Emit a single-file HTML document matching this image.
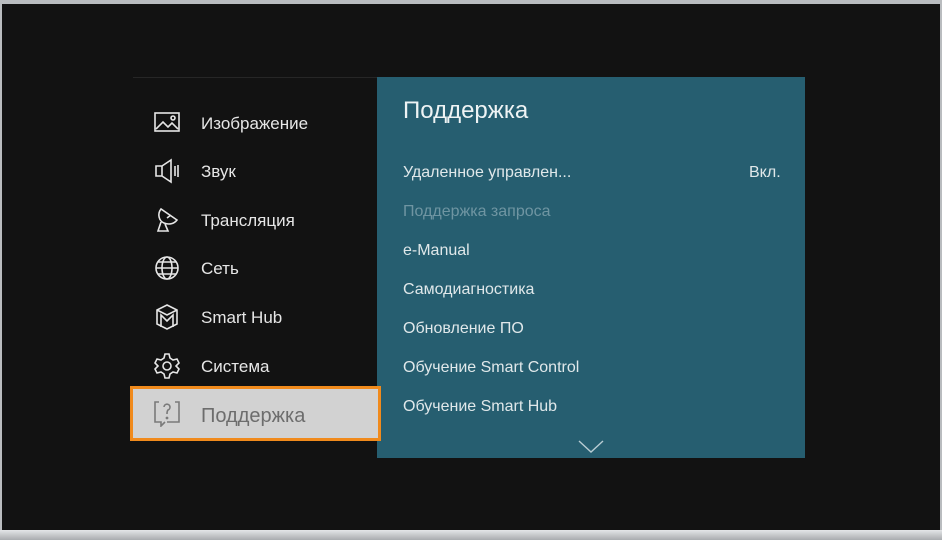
<!DOCTYPE html><html><head><meta charset="utf-8"><style>
body{margin:0;width:942px;height:540px;background:#b9bcbf;position:relative;overflow:hidden;font-family:"Liberation Sans","DejaVu Sans",sans-serif}
#scr{position:absolute;left:2px;top:4px;width:938px;height:526px;background:#121212}
#bot{position:absolute;left:0;top:530px;width:942px;height:10px;background:linear-gradient(#e4e6e8,#a9acaf)}
#left{position:absolute;left:133px;top:77px;width:244px;height:381px;background:#121212;border-top:1px solid #262626}
#right{position:absolute;left:377px;top:77px;width:428px;height:381px;background:#265e70}
.it{position:absolute;left:201px;color:#e6e6e6;font-size:17px;line-height:20px}
.ic{position:absolute;left:153px;width:28px;height:28px}
#sel{position:absolute;left:130px;top:386px;width:245px;height:49px;background:#d2d2d2;border:3px solid #f08a1c}
.r{position:absolute;left:403px;color:#e0e8ea;font-size:16px;line-height:20px}
</style></head><body>
<div id="scr"></div><div id="bot"></div>
<div id="left"></div>
<div id="right"></div>
<div id="sel"></div>
<svg class="ic" style="top:109px" viewBox="0 0 28 28" fill="none" stroke="#e6e6e6" stroke-width="1.6"><rect x="2" y="4" width="24" height="18"/><path d="M3 20l7-7 5 5 4-4 6 6"/><circle cx="20" cy="9" r="2"/></svg>
<div class="it" style="top:114px">Изображение</div>
<svg class="ic" style="top:157px" viewBox="0 0 28 28" fill="none" stroke="#e6e6e6" stroke-width="1.6"><path d="M3 9h6l9-6v22l-9-6H3z M9 9v10 M22 9v10 M25 8v12"/></svg>
<div class="it" style="top:162px">Звук</div>
<svg class="ic" style="top:206px" viewBox="0 0 28 28" fill="none" stroke="#e6e6e6" stroke-width="1.6"><path d="M8 3c-4 5-2 12 3 14s10 1 13-3z M14 12l4-3 M8 16l-3 9h10l-3-7"/></svg>
<div class="it" style="top:211px">Трансляция</div>
<svg class="ic" style="top:254px" viewBox="0 0 28 28" fill="none" stroke="#e6e6e6" stroke-width="1.6"><circle cx="14" cy="14" r="11"/><ellipse cx="14" cy="14" rx="5" ry="11"/><path d="M3 14h22 M5 8h18 M5 20h18"/></svg>
<div class="it" style="top:259px">Сеть</div>
<svg class="ic" style="top:303px" viewBox="0 0 28 28" fill="none" stroke="#e6e6e6" stroke-width="1.6"><path d="M14 2l10 5v14l-10 5-10-5V7z M4 7l10 5 10-5 M8 24V12l6 6 6-6v12"/></svg>
<div class="it" style="top:308px">Smart Hub</div>
<svg class="ic" style="top:352px" viewBox="0 0 28 28" fill="none" stroke="#e6e6e6" stroke-width="1.6"><circle cx="14" cy="14" r="4"/><path d="M12 2h4l1 4 3 2 4-1 2 4-3 3v0l3 3-2 4-4-1-3 2-1 4h-4l-1-4-3-2-4 1-2-4 3-3-3-3 2-4 4 1 3-2z"/></svg>
<div class="it" style="top:357px">Система</div>
<svg class="ic" style="top:399px" viewBox="0 0 28 28" fill="none" stroke="#7a7a7a" stroke-width="1.6"><path d="M6 3H2v20h6v4l4-4 M22 3h4v20H14"/><path d="M11 8a3 3 0 1 1 4 3c-1 1-1 2-1 4"/><circle cx="14" cy="19" r=".6" fill="#7a7a7a"/></svg>
<div class="it" style="top:404px;color:#6d6d6d;font-size:20px;line-height:24px">Поддержка</div>
<div class="r" style="top:97px;font-size:24px;line-height:28px;color:#eef3f4">Поддержка</div>
<div class="r" style="top:163px">Удаленное управлен...</div>
<div class="r" style="top:163px;left:749px">Вкл.</div>
<div class="r" style="top:202px;color:#6f95a2">Поддержка запроса</div>
<div class="r" style="top:241px">e-Manual</div>
<div class="r" style="top:280px">Самодиагностика</div>
<div class="r" style="top:319px">Обновление ПО</div>
<div class="r" style="top:358px">Обучение Smart Control</div>
<div class="r" style="top:397px">Обучение Smart Hub</div>
<svg style="position:absolute;left:578px;top:440px" width="26" height="14" viewBox="0 0 26 14" fill="none" stroke="#b8ccd3" stroke-width="1.4"><path d="M1 1l12 11 12-11"/></svg>
</body></html>
